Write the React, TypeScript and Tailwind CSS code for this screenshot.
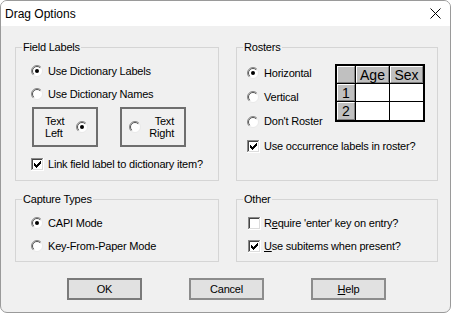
import type { ReactNode } from "react";

function Radio({ checked = false }: { checked?: boolean }) {
  return (
    <svg width="12" height="12" viewBox="0 0 12 12" className="shrink-0">
      <circle cx="6" cy="6" r="5.5" fill="#fff" stroke="#e8e8e8" />
      <path d="M9.9 2.1 A5.5 5.5 0 0 0 2.1 9.9" fill="none" stroke="#8a8a8a" />
      <path d="M9.2 2.8 A4.5 4.5 0 0 0 2.8 9.2" fill="none" stroke="#555" />
      {checked && <circle cx="6" cy="6" r="2" fill="#000" />}
    </svg>
  );
}

const CHECK_TOPS = [5, 6, 7, 6, 5, 4, 3];

function Check({ checked = false }: { checked?: boolean }) {
  return (
    <svg width="13" height="13" viewBox="0 0 13 13" className="shrink-0" shapeRendering="crispEdges">
      <rect x="0" y="0" width="13" height="13" fill="#fff" />
      <rect x="0" y="0" width="12" height="1" fill="#8a8a8a" />
      <rect x="0" y="0" width="1" height="12" fill="#8a8a8a" />
      <rect x="1" y="1" width="10" height="1" fill="#444" />
      <rect x="1" y="1" width="1" height="10" fill="#444" />
      <rect x="1" y="11" width="11" height="1" fill="#dcdcdc" />
      <rect x="11" y="1" width="1" height="11" fill="#dcdcdc" />
      {checked &&
        CHECK_TOPS.map((t, i) => (
          <rect key={i} x={3 + i} y={t} width="1" height="3" fill="#000" />
        ))}
    </svg>
  );
}

function GroupBox({
  title,
  className,
  children,
}: {
  title: string;
  className: string;
  children: ReactNode;
}) {
  return (
    <div className={`relative border border-[#d5d5d5] ${className}`}>
      <span className="absolute left-[6px] top-[-8px] bg-[#f0f0f0] px-px leading-[14px]">
        {title}
      </span>
      {children}
    </div>
  );
}

function HeadCell({ children }: { children?: ReactNode }) {
  return (
    <div className="flex items-center justify-center border border-t-white border-l-white border-r-[#808080] border-b-[#808080] bg-[#c0c0c0] font-['Liberation_Sans',Arial,sans-serif] text-[14px] leading-none tracking-normal">
      {children}
    </div>
  );
}

function Btn({ children, def = false }: { children: ReactNode; def?: boolean }) {
  return (
    <button
      className={`flex h-[22px] w-[75px] items-center justify-center bg-[#e1e1e1] ${
        def ? "border-2 border-[#7a7a7a]" : "border-2 border-[#8c8c8c]"
      }`}
    >
      {children}
    </button>
  );
}

export default function App() {
  return (
    <div className="flex h-[313px] w-[451px] flex-col overflow-hidden rounded-[7px] border border-[#9a9a9a] bg-[#f0f0f0] font-['Liberation_Sans',Arial,sans-serif] text-[11px] tracking-[-0.2px] text-black">
      <div className="flex h-[25px] shrink-0 items-center justify-between bg-white pl-[4px] pr-[9px]">
        <span className="text-[12px] tracking-normal">Drag Options</span>
        <svg width="11" height="11" viewBox="0 0 11 11">
          <path d="M0.5 0.5 L10.5 10.5 M10.5 0.5 L0.5 10.5" stroke="#000" strokeWidth="1" />
        </svg>
      </div>

      <div className="flex flex-col pl-[14px] pt-[21px]">
        <div className="flex gap-[17px]">
          <GroupBox title="Field Labels" className="h-[134px] w-[204px] pl-[15px] pt-[13px]">
            <div className="flex h-[20px] items-center gap-[5px]">
              <Radio checked />
              <span>Use Dictionary Labels</span>
            </div>
            <div className="mt-[3px] flex h-[20px] items-center gap-[5px]">
              <Radio />
              <span>Use Dictionary Names</span>
            </div>
            <div className="ml-px mt-[3px] flex gap-[22px]">
              <div className="flex h-[40px] w-[66px] items-center border-2 border-[#6e6e6e] pl-[11px]">
                <div className="w-[31px] leading-[12px]">
                  Text
                  <br />
                  Left
                </div>
                <Radio checked />
              </div>
              <div className="flex h-[40px] w-[66px] items-center border-2 border-[#6e6e6e] pl-[7px]">
                <Radio />
                <div className="w-[33px] text-right leading-[12px]">
                  Text
                  <br />
                  Right
                </div>
              </div>
            </div>
            <div className="mt-[7px] flex h-[20px] items-center gap-[4px]">
              <Check checked />
              <span>Link field label to dictionary item?</span>
            </div>
          </GroupBox>

          <GroupBox title="Rosters" className="h-[134px] w-[202px] pl-[10px] pt-[13px]">
            <div className="flex">
              <div className="w-[88px]">
                <div className="flex h-[24px] items-center gap-[5px]">
                  <Radio checked />
                  <span>Horizontal</span>
                </div>
                <div className="flex h-[24px] items-center gap-[5px]">
                  <Radio />
                  <span>Vertical</span>
                </div>
                <div className="flex h-[25px] items-center gap-[5px]">
                  <Radio />
                  <span>Don't Roster</span>
                </div>
              </div>
              <div className="mt-[3px] grid h-[58px] w-[90px] grid-cols-[18px_33px_33px] grid-rows-[17px_17px_18px] gap-px border-2 border-black bg-black">
                <HeadCell />
                <HeadCell>Age</HeadCell>
                <HeadCell>Sex</HeadCell>
                <HeadCell>1</HeadCell>
                <div className="bg-white" />
                <div className="bg-white" />
                <HeadCell>2</HeadCell>
                <div className="bg-white" />
                <div className="bg-white" />
              </div>
            </div>
            <div className="flex h-[24px] items-center gap-[4px]">
              <Check checked />
              <span>Use occurrence labels in roster?</span>
            </div>
          </GroupBox>
        </div>

        <div className="mt-[18px] flex gap-[17px]">
          <GroupBox title="Capture Types" className="h-[63px] w-[204px] pl-[15px] pt-[13px]">
            <div className="flex h-[20px] items-center gap-[5px]">
              <Radio checked />
              <span>CAPI Mode</span>
            </div>
            <div className="mt-[3px] flex h-[20px] items-center gap-[5px]">
              <Radio />
              <span>Key-From-Paper Mode</span>
            </div>
          </GroupBox>

          <GroupBox title="Other" className="h-[63px] w-[202px] pl-[11px] pt-[13px]">
            <div className="flex h-[20px] items-center gap-[3px]">
              <Check />
              <span>
                R<span className="underline">e</span>quire 'enter' key on entry?
              </span>
            </div>
            <div className="mt-[3px] flex h-[20px] items-center gap-[3px]">
              <Check checked />
              <span>
                <span className="underline">U</span>se subitems when present?
              </span>
            </div>
          </GroupBox>
        </div>

        <div className="ml-[52px] mt-[16px] flex gap-[47px]">
          <Btn def>OK</Btn>
          <Btn>Cancel</Btn>
          <Btn>
            <span>
              <span className="underline">H</span>elp
            </span>
          </Btn>
        </div>
      </div>
    </div>
  );
}
